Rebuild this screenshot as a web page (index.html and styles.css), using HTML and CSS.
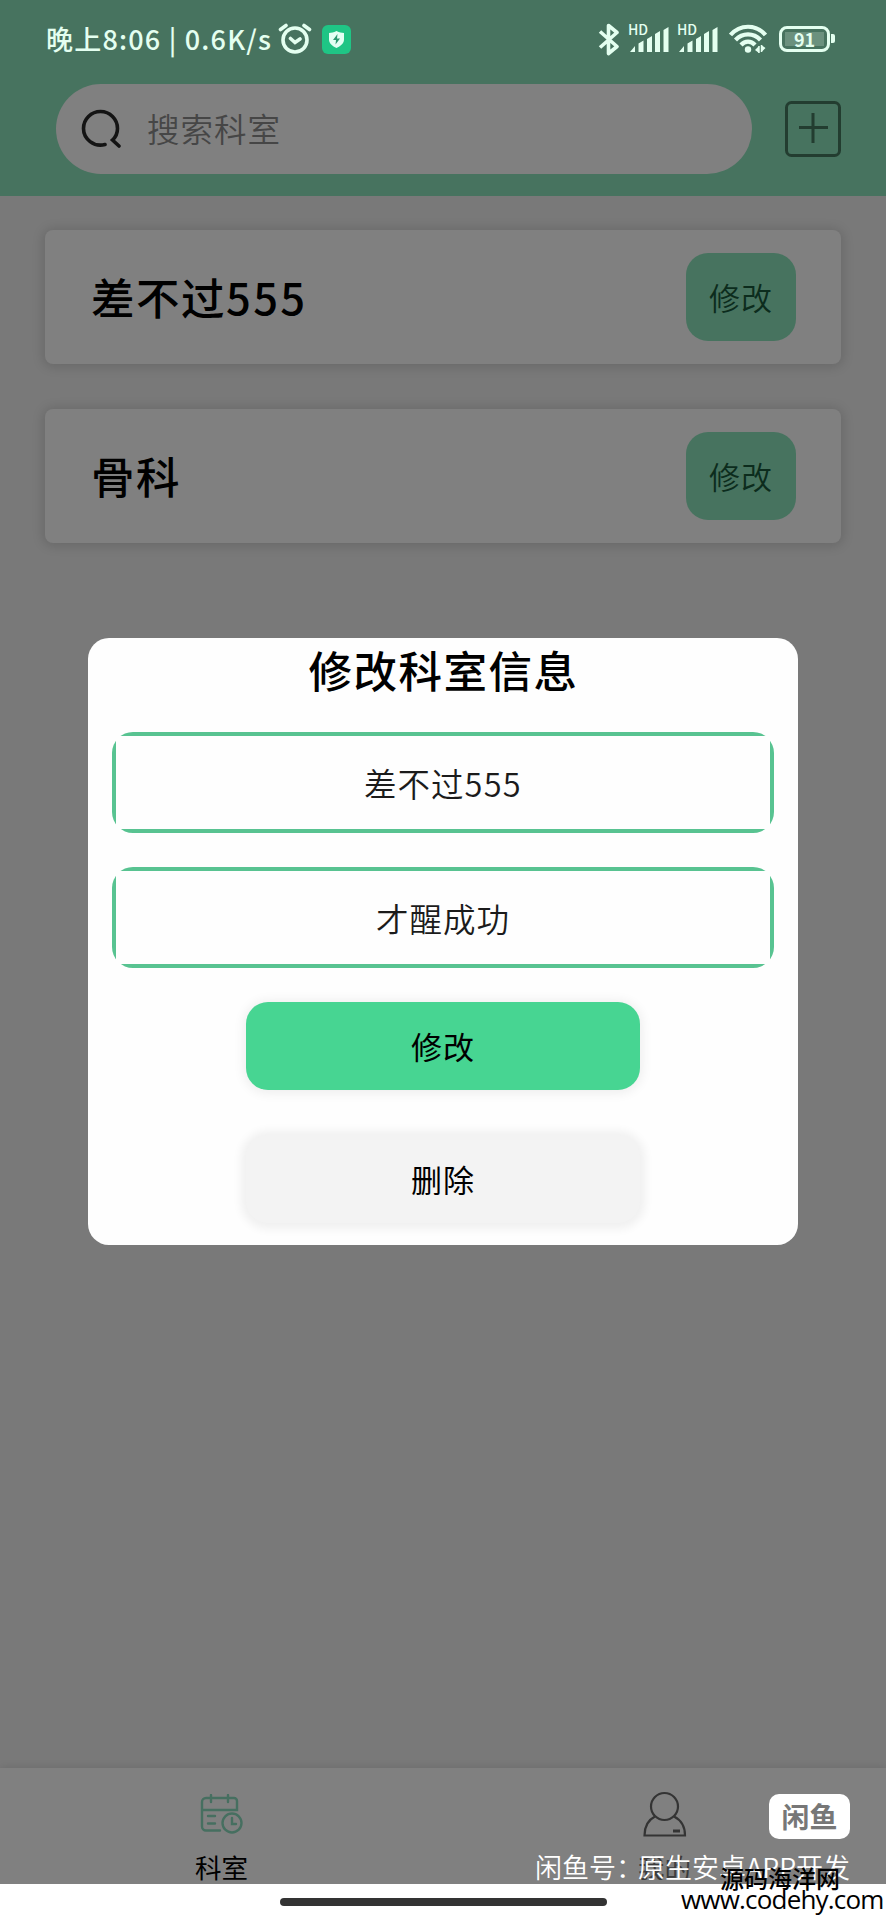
FILE: index.html
```html
<!DOCTYPE html>
<html lang="zh-CN">
<head>
<meta charset="utf-8">
<title>科室</title>
<link rel="stylesheet" href="styles.css">
</head>
<body>
<div class="screen">
  <header class="header">
    <div class="status">
      <span class="status-text">晚上8:06 | 0.6K/s</span>
      <svg class="alarm" width="34" height="32" viewBox="0 0 34 32" fill="none" stroke="#e4fff0" stroke-width="3.600" stroke-linecap="round">
        <circle cx="17" cy="17" r="12"/><path d="M2.500 6.500 8 2.500M31.500 6.500 26 2.500M12.500 15.500l4.500 4 5-3.500"/>
      </svg>
      <svg class="shield" width="29" height="29" viewBox="0 0 29 29">
        <rect width="29" height="29" rx="6" fill="#1fc585"/>
        <path d="M14.500 6c3 1.500 5 1.800 7.500 2v6.500c0 4-3.500 6.800-7.500 8.500-4-1.700-7.500-4.500-7.500-8.500V8c2.500-.2 4.500-.5 7.500-2z" fill="#e4fff4"/>
        <path d="M15.500 9l-4.500 6h3l-.5 4.500 4.500-6h-3z" fill="#2c9770"/>
      </svg>
      <span class="spacer"></span>
      <svg class="bluetooth" width="22" height="33" viewBox="0 0 22 33" fill="none" stroke="#e4fff0" stroke-width="3.600" stroke-linejoin="round">
        <path d="M2 8.500l17 15-8.500 7V2.500L19 9.500 2 24.500"/>
      </svg>
      <div class="signal">
        <span class="hd">HD</span>
        <svg width="42" height="27" viewBox="0 0 42 27" fill="#e4fff0"><path d="M1 26l5-6v6zM9.500 17.500l5-3V26h-5zM18 13l5-3v16h-5zM26 8l5-3v21h-5zM34.500 4l5-3v25h-5z"/></svg>
      </div>
      <div class="signal">
        <span class="hd">HD</span>
        <svg width="42" height="27" viewBox="0 0 42 27" fill="#e4fff0"><path d="M1 26l5-6v6zM9.500 17.500l5-3V26h-5zM18 13l5-3v16h-5zM26 8l5-3v21h-5zM34.500 4l5-3v25h-5z"/></svg>
      </div>
      <svg class="wifi" width="38" height="30" viewBox="0 0 38 30" fill="none" stroke="#e4fff0" stroke-width="4.200">
        <path d="M1.500 11C11 0 27 0 36.500 11M6.500 16c7-7.500 18-7.500 25 0M12 21c4-4.500 10-4.500 14 0"/>
        <circle cx="19" cy="25.500" r="3.200" fill="#e4fff0" stroke="none"/>
        <path d="M26 26l4-4v7zM36.500 24l-4-3v7z" fill="#e4fff0" stroke="none"/><path d="M30 22v7M32.500 21v7" stroke-width="1.500"/>
      </svg>
      <div class="battery"><span class="battery-level">91</span></div>
    </div>
    <div class="search-row">
      <div class="search">
        <svg class="search-icon" width="40" height="40" viewBox="0 0 40 40" fill="none" stroke="#141414" stroke-width="3.600" stroke-linecap="round">
          <path d="M24 35.500C13 38.500 2.500 30 2.500 19.500A17 17 0 0 1 36.500 19.500C36.500 24 34.800 28 31.500 31L38 37"/>
        </svg>
        <span class="placeholder">搜索科室</span>
      </div>
      <svg class="add" width="56" height="56" viewBox="0 0 56 56" fill="none" stroke="#233d30" stroke-width="3">
        <rect x="1.500" y="1.500" width="53" height="53" rx="5"/><path d="M14 26.500h29M28 12v30"/>
      </svg>
    </div>
  </header>

  <main class="list">
    <div class="card"><span class="name">差不过<span class="digits">555</span></span><span class="edit">修改</span></div>
    <div class="card"><span class="name">骨科</span><span class="edit">修改</span></div>
  </main>

  <nav class="tabs">
    <div class="tab">
      <svg class="tab-calendar" width="44" height="40" viewBox="0 0 44 40" fill="none" stroke="#466f60" stroke-width="2.400" stroke-linecap="round">
        <path d="M20 36.500H6a4 4 0 0 1-4-4V8a4 4 0 0 1 4-4h28a3 3 0 0 1 3 3v9H2M11 1v7M28 1v7M8 22h7M8 29.500h7"/>
        <circle cx="32" cy="29" r="9.500"/><path d="M32 24v6h4"/>
      </svg>
      <span>科室</span>
    </div>
    <div class="tab tab-off">
      <svg class="tab-person" width="44" height="46" viewBox="0 0 44 46" fill="none" stroke="#343434" stroke-width="2.200">
        <circle cx="21.500" cy="15.500" r="13.500"/><path d="M12 25.500C5 29 1.500 35 1.500 44.500H42C42 35 38 29 31 25.500"/><path d="M30 40h7" stroke-width="3"/>
      </svg>
      <span>我的</span>
    </div>
  </nav>
  <div class="gesture"><div class="handle"></div></div>

  <section class="modal">
    <h1 class="modal-title">修改科室信息</h1>
    <div class="field"><div class="field-inner">差不过<span class="digits-sm">555</span></div></div>
    <div class="field"><div class="field-inner">才醒成功</div></div>
    <div class="btn btn-primary">修改</div>
    <div class="btn btn-plain">删除</div>
  </section>

  <div class="badge">闲鱼</div>
  <div class="mark-author">闲鱼号<span class="colon">：</span>原生安卓APP开发</div>
  <div class="mark-site">源码海洋网</div>
  <div class="mark-url">www.codehy.com</div>
</div>
</body>
</html>
```
FILE: styles.css
```css
* { box-sizing: border-box; }
body { margin: 0; font-family: "Noto Sans CJK SC", sans-serif; }
.screen { position: relative; display: flex; flex-direction: column; width: 886px; height: 1920px; overflow: hidden; background: #797979; }

.header { height: 196px; background: #47735f; }
.status { display: flex; align-items: center; height: 78px; padding: 0 51px 0 46px; color: #e4fff0; }
.status-text { width: 232px; font-size: 27px; font-weight: 500; line-height: 40px; letter-spacing: 1.2px; white-space: nowrap; }
.shield { margin-left: 10px; }
.spacer { flex: 1; }
.bluetooth { margin-right: 9px; }
.signal { position: relative; display: flex; align-items: flex-end; width: 49px; height: 28px; }
.hd { position: absolute; left: -1px; top: -3px; font: 500 14px/14px "Noto Sans CJK SC", sans-serif; }
.wifi { margin: 0 12px 0 2px; }
.battery { position: relative; display: flex; width: 51px; height: 26px; margin-right: 5px; padding: 3px; border: 3px solid #e4fff0; border-radius: 8px; }
.battery::after { content: ""; position: absolute; right: -8px; top: 5px; width: 4px; height: 9px; border-radius: 0 2px 2px 0; background: #e4fff0; }
.battery-level { flex: 1; background: #6b917e; font-size: 18px; font-weight: 700; line-height: 14px; text-align: center; }

.search-row { display: flex; align-items: center; justify-content: space-between; padding: 6px 45px 0 56px; }
.search { display: flex; align-items: center; gap: 26px; width: 696px; height: 90px; padding-left: 25px; border-radius: 45px; background: #808080; }
.placeholder { margin-top: -2px; font-size: 32.500px; line-height: 50px; font-weight: 350; letter-spacing: 1px; color: #464646; }

.list { display: flex; flex: 1; flex-direction: column; gap: 45px; padding: 34px 45px 0; }
.card { display: flex; align-items: center; justify-content: space-between; height: 134px; padding: 0 45px 0 46px; border-radius: 8px; background: #808080; box-shadow: 0 1px 12px 2px rgba(0, 0, 0, .14); }
.name { margin-top: -1px; font-size: 43.500px; font-weight: 500; letter-spacing: 1.500px; color: #000; }
.digits { letter-spacing: .055em; }
.digits-sm { letter-spacing: .04em; }
.edit { width: 110px; height: 88px; border-radius: 22px; background: #47735f; color: #0c2c1d; font-size: 31px; font-weight: 350; letter-spacing: 1px; line-height: 88px; text-align: center; }

.tabs { display: flex; height: 116px; background: #808080; box-shadow: 0 -1px 8px rgba(0, 0, 0, .1); }
.tab { display: flex; flex: 1; flex-direction: column; align-items: center; justify-content: flex-end; color: #000; font-size: 26.500px; line-height: 40px; }
.tab-off { color: #3c3c3c; }
.tab-calendar { margin-bottom: 13px; }
.tab-person { margin-bottom: 10px; }
.tab span { height: 37px; }
.gesture { display: flex; justify-content: center; height: 36px; padding-top: 14px; background: #fff; }
.handle { width: 327px; height: 8px; border-radius: 4px; background: #333; }

.modal { position: absolute; left: 88px; top: 638px; display: flex; flex-direction: column; align-items: center; width: 710px; height: 607px; border-radius: 21px; background: #fefefe; }
.modal-title { margin: 0 0 31px; padding-left: 1px; font-size: 43.500px; font-weight: 500; letter-spacing: 1.500px; line-height: 63px; }
.field { width: 662px; height: 101px; margin-bottom: 34px; padding: 4px; border-radius: 21px; background: #58c391; }
.field-inner { height: 93px; background: #fefefe; color: #1b1b1b; font-size: 32.500px; font-weight: 350; letter-spacing: 1px; line-height: 93px; text-align: center; }
.btn { width: 394px; height: 88px; border-radius: 22px; color: #000; font-size: 31px; letter-spacing: 1px; line-height: 88px; text-align: center; }
.btn-primary { margin-bottom: 45px; background: #47d592; box-shadow: 0 1px 12px 2px rgba(0, 0, 0, .07); }
.btn-plain { background: #f3f3f3; box-shadow: 0 1px 10px 5px rgba(0, 0, 0, .06); }

.badge { position: absolute; left: 769px; top: 1794px; width: 81px; height: 45px; border-radius: 10px; background: #fff; color: #777; font-size: 28px; font-weight: 700; line-height: 44px; text-align: center; }
.mark-author { position: absolute; left: 535px; top: 1847px; color: #fff; font-size: 27px; font-weight: 350; line-height: 40px; white-space: nowrap; }
.colon { letter-spacing: -5px; }
.mark-site { position: absolute; left: 720px; top: 1860px; color: #000; font-size: 24px; font-weight: 500; line-height: 36px; white-space: nowrap; }
.mark-url { position: absolute; left: 681px; top: 1879px; color: #000; font: 500 26px/40px "Open Sans", sans-serif; letter-spacing: -.8px; white-space: nowrap; }
```
